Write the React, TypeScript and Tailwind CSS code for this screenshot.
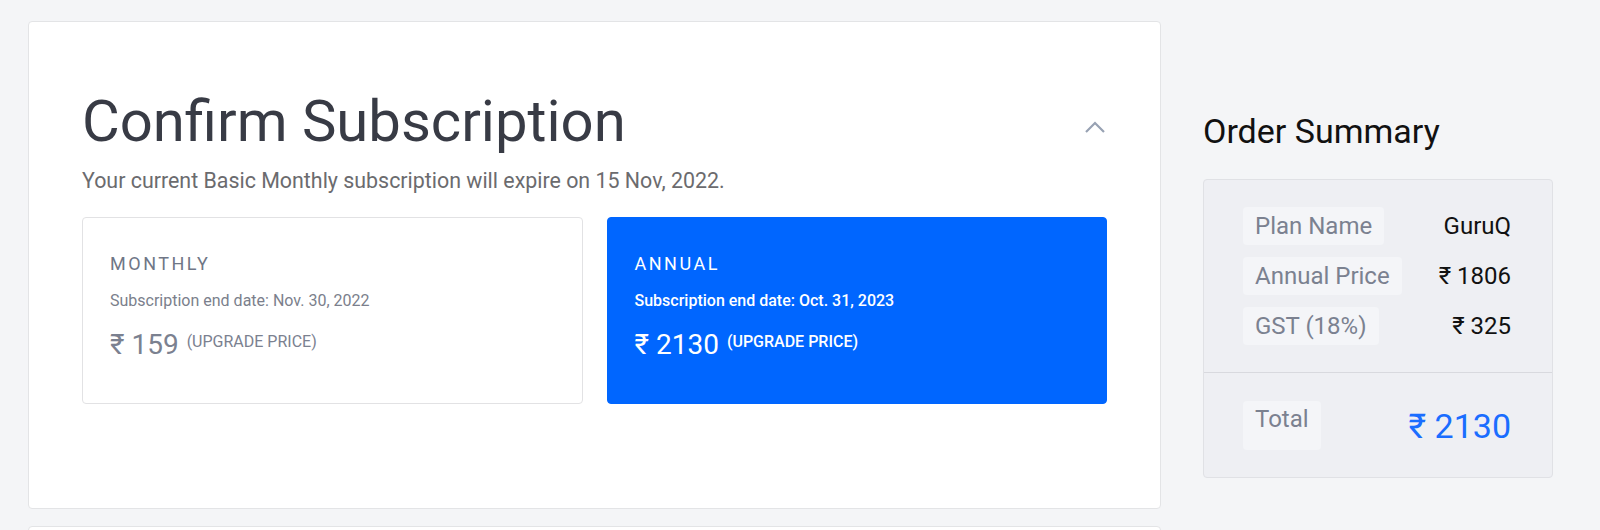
import React from "react";

function Chip({ children, tall }: { children: React.ReactNode; tall?: boolean }) {
  return (
    <span
      className={`inline-flex rounded-[4px] bg-[#f4f5f8] px-[12px] text-[24px] leading-[28px] text-[#7b8190] ${
        tall ? "h-[49px] items-start pt-[4px]" : "h-[38px] items-center"
      }`}
    >
      {children}
    </span>
  );
}

export default function App() {
  return (
    <div
      className="h-[530px] w-[1600px] overflow-hidden bg-[#f4f5f7] pl-[28px] pt-[21px]"
      style={{ fontFamily: "Roboto, 'Liberation Sans', sans-serif" }}
    >
      <div className="flex items-start gap-[42px]">
        <div className="flex flex-col gap-[17px]">
          <div className="h-[488px] w-[1133px] rounded-[4px] border border-[#e3e4e6] bg-white px-[53px] pt-[65px]">
            <div className="flex items-start justify-between">
              <h1 className="text-[58px] leading-[68px] font-normal text-[#383b45]">
                Confirm Subscription
              </h1>
              <svg
                width="20"
                height="12"
                viewBox="0 0 20 12"
                className="mr-[2px] mt-[34px] overflow-visible"
                fill="none"
                stroke="#98a2b3"
                strokeWidth="2.2"
              >
                <path d="M1 11 L10 2 L19 11" />
              </svg>
            </div>
            <p className="mt-[12px] text-[21.4px] leading-[28px] text-[#6b6b6e]">
              Your current Basic Monthly subscription will expire on 15 Nov, 2022.
            </p>
            <div className="mt-[22px] grid grid-cols-2 gap-[24px]">
              <div className="h-[187px] rounded-[4px] border border-[#e2e2e4] bg-white px-[27px] pt-[34px]">
                <div className="text-[18px] leading-[24px] tracking-[0.14em] text-[#6f7686]">
                  MONTHLY
                </div>
                <div className="mt-[15px] text-[16px] leading-[20px] text-[#7b7f8c]">
                  Subscription end date: Nov. 30, 2022
                </div>
                <div className="mt-[17px] flex items-start text-[#7b8190]">
                  <span className="text-[28px] leading-[34px]">₹ 159</span>
                  <span className="ml-[8px] mt-[4px] text-[16px] leading-[20px]">
                    (UPGRADE PRICE)
                  </span>
                </div>
              </div>
              <div className="h-[187px] rounded-[4px] border border-[#0066ff] bg-[#0066ff] px-[27px] pt-[34px] text-white">
                <div className="text-[18px] leading-[24px] tracking-[0.14em]">ANNUAL</div>
                <div className="mt-[15px] text-[16px] leading-[20px] font-medium">
                  Subscription end date: Oct. 31, 2023
                </div>
                <div className="mt-[17px] flex items-start">
                  <span className="text-[28px] leading-[34px]">₹ 2130</span>
                  <span className="ml-[8px] mt-[4px] text-[16px] leading-[20px] font-medium">
                    (UPGRADE PRICE)
                  </span>
                </div>
              </div>
            </div>
          </div>
          <div className="h-[40px] w-[1133px] rounded-[4px] border border-[#e3e4e6] bg-white" />
        </div>

        <div className="mt-[90px] w-[350px]">
          <h2 className="text-[34px] leading-[40px] text-[#111111]">Order Summary</h2>
          <div className="mt-[28px] rounded-[4px] border border-[#e0e1e5] bg-[#eeeff3]">
            <div className="flex flex-col gap-[12px] pb-[27px] pl-[39px] pr-[41px] pt-[27px]">
              <div className="flex items-center justify-between">
                <Chip>Plan Name</Chip>
                <span className="text-[24px] leading-[28px] text-[#111]">GuruQ</span>
              </div>
              <div className="flex items-center justify-between">
                <Chip>Annual Price</Chip>
                <span className="text-[24px] leading-[28px] text-[#111]">₹ 1806</span>
              </div>
              <div className="flex items-center justify-between">
                <Chip>GST (18%)</Chip>
                <span className="text-[24px] leading-[28px] text-[#111]">₹ 325</span>
              </div>
            </div>
            <div className="flex items-start justify-between border-t border-[#d8d9de] pb-[27px] pl-[39px] pr-[41px] pt-[28px]">
              <Chip tall>Total</Chip>
              <span className="mt-[5px] text-[34px] leading-[40px] text-[#1a6dff]">₹ 2130</span>
            </div>
          </div>
        </div>
      </div>
    </div>
  );
}
